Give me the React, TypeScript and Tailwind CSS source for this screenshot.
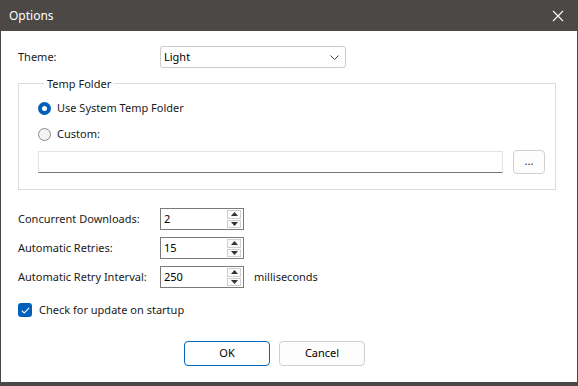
import React from "react";

// Options dialog, windows 11 look

const font = { fontFamily: '"Noto Sans", "Open Sans", sans-serif' };

const Radio = ({ checked, label }: { checked?: boolean; label: string }) => (
  <div className="flex items-center h-[26px]">
    <span
      className={
        checked
          ? "w-[13px] h-[13px] rounded-full bg-[#005fb8] flex items-center justify-center"
          : "w-[13px] h-[13px] rounded-full border border-[#8a8a8a] bg-[#f3f3f3]"
      }
    >
      {checked && <span className="w-[5px] h-[5px] rounded-full bg-white" />}
    </span>
    <span className="ml-[6px] text-[11px] text-[#1a1a1a]">{label}</span>
  </div>
);

const Spin = ({ value }: { value: string }) => (
  <div className="w-[84px] h-[22px] border border-[#7a7a7a] bg-white flex items-center">
    <span className="flex-1 pl-[3px] text-[11px] text-black">{value}</span>
    <div className="w-[14px] h-[18px] mr-[2px] flex flex-col gap-[1px]">
      <div className="flex-1 border border-[#cfcfcf] bg-[#fafafa] flex items-center justify-center">
        <svg width="7" height="4" viewBox="0 0 7 4">
          <path d="M0 4 L3.5 0 L7 4 Z" fill="#333" />
        </svg>
      </div>
      <div className="flex-1 border border-[#cfcfcf] bg-[#fafafa] flex items-center justify-center">
        <svg width="7" height="4" viewBox="0 0 7 4">
          <path d="M0 0 L3.5 4 L7 0 Z" fill="#333" />
        </svg>
      </div>
    </div>
  </div>
);

const App: React.FC = () => {
  return (
    <div className="w-[578px] h-[386px] bg-[#4b4845] flex flex-col overflow-hidden" style={font}>
      <div className="h-[31px] flex items-center justify-between pl-[9px] pr-[14px] text-white">
        <span className="text-[12px]">Options</span>
        <svg width="12" height="12" viewBox="0 0 12 12">
          <path d="M1 1 L11 11 M11 1 L1 11" stroke="#fff" strokeWidth="1.1" />
        </svg>
      </div>
      <div className="flex-1 bg-white mx-[1px] mb-[4px] pl-[17px] pt-[15px] text-[11px] text-[#1a1a1a]">
        <div className="flex items-center h-[22px]">
          <span className="w-[142px]">Theme:</span>
          <div className="w-[186px] h-[22px] border border-[#cccccc] rounded-[3px] flex items-center justify-between pl-[3px] pr-[6px] text-black">
            <span>Light</span>
            <svg width="9" height="5" viewBox="0 0 9 5">
              <path d="M0.5 0.5 L4.5 4.5 L8.5 0.5" stroke="#444" fill="none" strokeWidth="1" />
            </svg>
          </div>
        </div>

        <fieldset className="mt-[8px] w-[538px] h-[114px] border border-[#dcdcdc] pl-[19px] pr-[10px]">
          <legend className="ml-[6px] px-[3px] text-[11px] leading-[15px]">Temp Folder</legend>
          <div className="mt-[4px]">
            <Radio checked label="Use System Temp Folder" />
            <Radio label="Custom:" />
          </div>
          <div className="flex items-center mt-[3px]">
            <div className="w-[465px] h-[22px] border border-[#e3e3e3] border-b-[#767676]" />
            <div className="ml-[10px] w-[32px] h-[24px] border border-[#d0d0d0] rounded-[4px] bg-[#fdfdfd] flex items-center justify-center text-[11px] leading-none pb-[3px]">
              ...
            </div>
          </div>
        </fieldset>

        <div className="mt-[18px] flex flex-col gap-[7px]">
          <div className="flex items-center">
            <span className="w-[142px]">Concurrent Downloads:</span>
            <Spin value="2" />
          </div>
          <div className="flex items-center">
            <span className="w-[142px]">Automatic Retries:</span>
            <Spin value="15" />
          </div>
          <div className="flex items-center">
            <span className="w-[142px]">Automatic Retry Interval:</span>
            <Spin value="250" />
            <span className="ml-[10px]">milliseconds</span>
          </div>
        </div>

        <div className="flex items-center mt-[14px]">
          <span className="w-[14px] h-[14px] rounded-[3px] bg-[#005fb8] flex items-center justify-center">
            <svg width="9" height="7" viewBox="0 0 9 7">
              <path d="M0.8 3.6 L3.2 6 L8.2 0.8" stroke="#fff" fill="none" strokeWidth="1.1" />
            </svg>
          </span>
          <span className="ml-[7px]">Check for update on startup</span>
        </div>

        <div className="flex mt-[22px] ml-[166px] gap-[9px]">
          <div className="w-[86px] h-[25px] border border-[#0067c0] rounded-[4px] flex items-center justify-center text-black">
            OK
          </div>
          <div className="w-[86px] h-[25px] border border-[#d0d0d0] rounded-[4px] bg-[#fdfdfd] flex items-center justify-center text-black">
            Cancel
          </div>
        </div>
      </div>
    </div>
  );
};

export default App;
